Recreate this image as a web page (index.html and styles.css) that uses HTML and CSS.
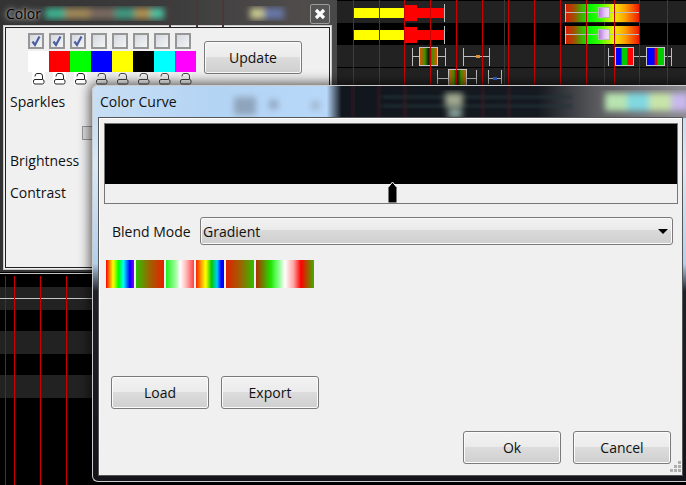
FILE: index.html
```html
<!DOCTYPE html>
<html lang="en">
<head>
<meta charset="utf-8">
<title>Color Curve</title>
<link rel="stylesheet" href="styles.css">
</head>
<body>
<main class="desktop">
  <svg class="timeline" width="686" height="485" viewBox="0 0 686 485">
    <defs>
      <linearGradient id="wide"><stop offset="0" stop-color="#e01800"/><stop offset=".12" stop-color="#a05000"/><stop offset=".3" stop-color="#00f000"/><stop offset=".45" stop-color="#30ff00"/><stop offset=".65" stop-color="#f0f000"/><stop offset=".8" stop-color="#ffa000"/><stop offset="1" stop-color="#f01000"/></linearGradient>
      <linearGradient id="pill"><stop offset="0" stop-color="#b070e0"/><stop offset=".6" stop-color="#e8c8f4"/><stop offset="1" stop-color="#f0e0f8"/></linearGradient>
      <linearGradient id="dk"><stop offset="0" stop-color="#e85000"/><stop offset=".3" stop-color="#409000"/><stop offset=".5" stop-color="#102000"/><stop offset=".7" stop-color="#409000"/><stop offset="1" stop-color="#e85000"/></linearGradient>
      <linearGradient id="rgb1"><stop offset="0" stop-color="#00f"/><stop offset=".3" stop-color="#00f"/><stop offset=".38" stop-color="#0c0"/><stop offset=".62" stop-color="#0c0"/><stop offset=".7" stop-color="#f00"/><stop offset="1" stop-color="#f00"/></linearGradient>
      <linearGradient id="rgb2"><stop offset="0" stop-color="#00f"/><stop offset=".42" stop-color="#00f"/><stop offset=".48" stop-color="#e00"/><stop offset=".58" stop-color="#e00"/><stop offset=".64" stop-color="#0c0"/><stop offset="1" stop-color="#0c0"/></linearGradient>
    </defs>
    <rect x="337" y="1" width="349" height="22" fill="#222"/>
    <rect x="337" y="45" width="349" height="22" fill="#222"/>
    <rect x="337" y="68" width="349" height="17" fill="#222"/>
    <rect x="0" y="287" width="100" height="23" fill="#222"/>
    <rect x="0" y="331" width="100" height="23" fill="#222"/>
    <rect x="0" y="375" width="100" height="23" fill="#222"/>
    <g fill="#383838">
      <rect x="504" y="0" width="1" height="85"/><rect x="604" y="0" width="1" height="85"/><rect x="5" y="276" width="1" height="209"/>
    </g>
    <g fill="#c4c4c4">
      <rect x="0" y="273" width="100" height="1"/><rect x="0" y="298" width="100" height="1"/>
    </g>
    <g fill="#ff0">
      <rect x="354" y="8" width="50" height="10"/><rect x="354" y="30" width="50" height="10"/>
    </g>
    <g fill="#f00">
      <rect x="404" y="5" width="13" height="16"/><rect x="417" y="8" width="27" height="10"/>
      <rect x="404" y="27" width="13" height="16"/><rect x="417" y="30" width="27" height="10"/>
    </g>
    <rect x="565" y="4" width="75" height="18" fill="url(#wide)"/>
    <rect x="565" y="26" width="75" height="18" fill="url(#wide)"/>
    <rect x="419.500" y="47.500" width="18" height="18" fill="url(#dk)" stroke="#c4c4c4"/>
    <rect x="448.500" y="69.500" width="18" height="18" fill="url(#dk)" stroke="#c4c4c4"/>
    <rect x="615.500" y="47.500" width="18" height="18" fill="url(#rgb1)" stroke="#c4c4c4"/>
    <rect x="646.500" y="47.500" width="18" height="18" fill="url(#rgb2)" stroke="#c4c4c4"/>
    <g fill="#bdbdbd">
      <rect x="444" y="4" width="1" height="18"/><rect x="444" y="26" width="1" height="18"/>
      <rect x="565" y="4" width="1" height="18"/><rect x="639" y="4" width="1" height="18"/><rect x="565" y="12" width="75" height="1"/>
      <rect x="565" y="26" width="1" height="18"/><rect x="639" y="26" width="1" height="18"/><rect x="565" y="34" width="75" height="1"/>
      <rect x="412" y="48" width="1" height="18"/><rect x="445" y="48" width="1" height="18"/><rect x="412" y="56" width="7" height="1"/><rect x="438" y="56" width="7" height="1"/>
      <rect x="463" y="48" width="1" height="18"/><rect x="489" y="48" width="1" height="18"/><rect x="463" y="56" width="26" height="1"/>
      <rect x="608" y="48" width="1" height="18"/><rect x="671" y="48" width="1" height="18"/><rect x="608" y="56" width="7" height="1"/><rect x="634" y="56" width="12" height="1"/><rect x="665" y="56" width="7" height="1"/>
      <rect x="437" y="70" width="1" height="14"/><rect x="476" y="70" width="1" height="14"/><rect x="437" y="78" width="11" height="1"/><rect x="467" y="78" width="10" height="1"/>
      <rect x="488" y="70" width="1" height="14"/><rect x="501" y="70" width="1" height="14"/><rect x="488" y="78" width="13" height="1"/>
    </g>
    <rect x="598.500" y="7.500" width="11" height="10" fill="url(#pill)" stroke="#b8b8b8"/>
    <rect x="598.500" y="29.500" width="11" height="10" fill="url(#pill)" stroke="#b8b8b8"/>
    <rect x="476" y="55" width="4" height="3" fill="#d89030"/>
    <rect x="493" y="77" width="4" height="3" fill="#3060d0"/>
    <g fill="#c80000">
      <rect x="353" y="0" width="1" height="85"/><rect x="379" y="0" width="1" height="85"/><rect x="404" y="0" width="1" height="85"/>
      <rect x="430" y="0" width="1" height="85"/><rect x="456" y="0" width="1" height="85"/><rect x="482" y="0" width="1" height="85"/>
      <rect x="508" y="0" width="1" height="85"/><rect x="534" y="0" width="1" height="85"/><rect x="560" y="0" width="1" height="85"/>
      <rect x="586" y="0" width="1" height="85"/><rect x="614" y="0" width="1" height="85"/><rect x="639" y="0" width="1" height="85"/>
      <rect x="667" y="0" width="1" height="85"/>
      <rect x="14" y="276" width="1" height="209"/><rect x="40" y="276" width="1" height="209"/><rect x="66" y="276" width="1" height="209"/>
    </g>
  </svg>

  <section class="window color-window">
    <header class="color-title">
      <svg class="glass" width="331" height="27" viewBox="0 0 331 27">
        <defs><filter id="soft"><feGaussianBlur stdDeviation="3"/></filter></defs>
        <g fill="#483838">
          <rect x="169" y="0" width="2" height="27"/><rect x="196" y="0" width="2" height="27"/><rect x="222" y="0" width="2" height="27"/>
        </g>
        <g filter="url(#soft)">
          <rect x="45" y="8" width="20" height="11" fill="#40b090"/>
          <rect x="65" y="8" width="25" height="11" fill="#a08858"/>
          <rect x="90" y="8" width="25" height="11" fill="#7a6a60"/>
          <rect x="115" y="8" width="20" height="11" fill="#409a80"/>
          <rect x="135" y="8" width="15" height="11" fill="#b09050"/>
          <rect x="150" y="8" width="14" height="11" fill="#50c0a0"/>
          <rect x="250" y="8" width="14" height="11" fill="#c8c890"/>
          <rect x="264" y="8" width="20" height="11" fill="#6878a8"/>
        </g>
      </svg>
      <h2 class="color-heading">Color</h2>
      <button class="close" type="button" aria-label="Close">
        <svg width="12" height="12" viewBox="0 0 12 12"><path d="M2 2 L10 10 M10 2 L2 10" stroke="#fff" stroke-width="3.200"/></svg>
      </button>
    </header>
    <div class="color-body">
      <div class="palette-row">
        <div class="palette">
          <span class="check on"><svg width="14" height="14" viewBox="0 0 14 14"><path d="M3.500 7.500 L6 11 L10.500 2.500" fill="none" stroke="#4a5f9f" stroke-width="2.200"/></svg></span>
          <span class="check on"><svg width="14" height="14" viewBox="0 0 14 14"><path d="M3.500 7.500 L6 11 L10.500 2.500" fill="none" stroke="#4a5f9f" stroke-width="2.200"/></svg></span>
          <span class="check on"><svg width="14" height="14" viewBox="0 0 14 14"><path d="M3.500 7.500 L6 11 L10.500 2.500" fill="none" stroke="#4a5f9f" stroke-width="2.200"/></svg></span>
          <span class="check"></span><span class="check"></span><span class="check"></span><span class="check"></span><span class="check"></span>
          <span class="sw white"></span><span class="sw red"></span><span class="sw green"></span><span class="sw blue"></span><span class="sw yellow"></span><span class="sw black"></span><span class="sw cyan"></span><span class="sw magenta"></span>
          <span class="lock open"><svg width="13" height="12" viewBox="0 0 13 12"><path d="M3 3.500 Q3 .500 5 .500 H8 Q10.500 .500 10.500 3 V6 M3 6.500 H10.500 Q12 6.500 12 8 V9.500 Q12 11 10.500 11 H3 Q1.500 11 1.500 9.500 V8 Q1.500 6.500 3 6.500 Z" fill="none" stroke="#222"/></svg></span>
          <span class="lock open"><svg width="13" height="12" viewBox="0 0 13 12"><path d="M3 3.500 Q3 .500 5 .500 H8 Q10.500 .500 10.500 3 V6 M3 6.500 H10.500 Q12 6.500 12 8 V9.500 Q12 11 10.500 11 H3 Q1.500 11 1.500 9.500 V8 Q1.500 6.500 3 6.500 Z" fill="none" stroke="#222"/></svg></span>
          <span class="lock open"><svg width="13" height="12" viewBox="0 0 13 12"><path d="M3 3.500 Q3 .500 5 .500 H8 Q10.500 .500 10.500 3 V6 M3 6.500 H10.500 Q12 6.500 12 8 V9.500 Q12 11 10.500 11 H3 Q1.500 11 1.500 9.500 V8 Q1.500 6.500 3 6.500 Z" fill="none" stroke="#222"/></svg></span>
          <span class="lock"><svg width="13" height="12" viewBox="0 0 13 12"><path d="M3 3.500 Q3 .500 5 .500 H8 Q10.500 .500 10.500 3 V6 M3 6.500 H10.500 Q12 6.500 12 8 V9.500 Q12 11 10.500 11 H3 Q1.500 11 1.500 9.500 V8 Q1.500 6.500 3 6.500 Z" fill="none" stroke="#444"/></svg></span>
          <span class="lock"><svg width="13" height="12" viewBox="0 0 13 12"><path d="M3 3.500 Q3 .500 5 .500 H8 Q10.500 .500 10.500 3 V6 M3 6.500 H10.500 Q12 6.500 12 8 V9.500 Q12 11 10.500 11 H3 Q1.500 11 1.500 9.500 V8 Q1.500 6.500 3 6.500 Z" fill="none" stroke="#444"/></svg></span>
          <span class="lock"><svg width="13" height="12" viewBox="0 0 13 12"><path d="M3 3.500 Q3 .500 5 .500 H8 Q10.500 .500 10.500 3 V6 M3 6.500 H10.500 Q12 6.500 12 8 V9.500 Q12 11 10.500 11 H3 Q1.500 11 1.500 9.500 V8 Q1.500 6.500 3 6.500 Z" fill="none" stroke="#444"/></svg></span>
          <span class="lock"><svg width="13" height="12" viewBox="0 0 13 12"><path d="M3 3.500 Q3 .500 5 .500 H8 Q10.500 .500 10.500 3 V6 M3 6.500 H10.500 Q12 6.500 12 8 V9.500 Q12 11 10.500 11 H3 Q1.500 11 1.500 9.500 V8 Q1.500 6.500 3 6.500 Z" fill="none" stroke="#444"/></svg></span>
          <span class="lock"><svg width="13" height="12" viewBox="0 0 13 12"><path d="M3 3.500 Q3 .500 5 .500 H8 Q10.500 .500 10.500 3 V6 M3 6.500 H10.500 Q12 6.500 12 8 V9.500 Q12 11 10.500 11 H3 Q1.500 11 1.500 9.500 V8 Q1.500 6.500 3 6.500 Z" fill="none" stroke="#444"/></svg></span>
        </div>
        <button class="btn update" type="button">Update</button>
      </div>
      <div class="field sparkles">Sparkles</div>
      <div class="mini-row"><span class="mini"></span></div>
      <div class="field brightness">Brightness</div>
      <div class="field contrast">Contrast</div>
    </div>
  </section>

  <section class="window dialog">
    <header class="dialog-title">
      <svg class="glass" width="594" height="33" viewBox="0 0 594 33">
        <defs>
          <filter id="softer"><feGaussianBlur stdDeviation="3"/></filter>
          <filter id="softest"><feGaussianBlur stdDeviation="1.500"/></filter>
          <linearGradient id="glassbg">
            <stop offset="0" stop-color="#c8dff4"/><stop offset=".2" stop-color="#b4d4f4"/><stop offset=".395" stop-color="#b8d8fa"/><stop offset=".42" stop-color="#12171e"/><stop offset=".75" stop-color="#151a20"/><stop offset=".85" stop-color="#5a5a5e"/><stop offset="1" stop-color="#8a8a90"/>
          </linearGradient>
        </defs>
        <rect width="594" height="33" fill="url(#glassbg)"/>
        <g filter="url(#softest)">
          <g fill="#243038">
            <rect x="290" y="11" width="190" height="2"/><rect x="290" y="20" width="190" height="2"/>
          </g>
          <g fill="#3a1c24">
            <rect x="260" y="0" width="2" height="33"/><rect x="286" y="0" width="2" height="33"/><rect x="312" y="0" width="2" height="33"/>
            <rect x="390" y="0" width="2" height="33"/><rect x="416" y="0" width="2" height="33"/>
          </g>
        </g>
        <g filter="url(#softer)">
          <rect x="142" y="12" width="22" height="18" fill="#8ea4bc"/>
          <rect x="177" y="15" width="9" height="9" fill="#90a6be"/>
          <rect x="219" y="16" width="9" height="9" fill="#a0b8d0"/>
          <rect x="353" y="8" width="18" height="14" fill="#a0a890"/>
          <rect x="356" y="24" width="14" height="9" fill="#90a8a0"/>
          <rect x="513" y="8" width="22" height="18" fill="#b8e4b0"/>
          <rect x="535" y="8" width="22" height="18" fill="#80d8e0"/>
          <rect x="557" y="8" width="22" height="18" fill="#c8e4a8"/>
          <rect x="579" y="8" width="18" height="18" fill="#c8b8ec"/>
        </g>
      </svg>
      <h2 class="dialog-heading">Color Curve</h2>
    </header>
    <div class="dialog-body">
      <div class="curve">
        <div class="curve-black"></div>
        <svg class="handle" width="11" height="22" viewBox="0 0 11 22"><path d="M1.500 21.500 V6 L5.500 1 L9.500 6 V21.500 Z" fill="#000"/><path d="M1.500 6 L5.500 1 L9.500 6" fill="none" stroke="#fff"/></svg>
      </div>
      <div class="blend-row">
        <span class="blend-label">Blend Mode</span>
        <div class="combo"><span>Gradient</span><i class="arrow"></i></div>
      </div>
      <div class="gradients">
        <span class="grad g1"></span><span class="grad g2"></span><span class="grad g3"></span><span class="grad g4"></span><span class="grad g5"></span><span class="grad g6"></span><span class="grad g7"></span>
      </div>
      <div class="file-row">
        <button class="btn" type="button">Load</button>
        <button class="btn" type="button">Export</button>
      </div>
      <div class="action-row">
        <button class="btn" type="button">Ok</button>
        <button class="btn" type="button">Cancel</button>
      </div>
      <svg class="grip" width="14" height="14" viewBox="0 0 14 14" fill="#b0b0b0">
        <rect x="10" y="1" width="3" height="3"/><rect x="6" y="5" width="3" height="3"/><rect x="10" y="5" width="3" height="3"/><rect x="2" y="9" width="3" height="3"/><rect x="6" y="9" width="3" height="3"/><rect x="10" y="9" width="3" height="3"/>
      </svg>
    </div>
  </section>
</main>
</body>
</html>
```
FILE: styles.css
```css
* { box-sizing: border-box; }
html, body { margin: 0; padding: 0; background: #000; }
body { font-family: "Open Sans", "Noto Sans", sans-serif; font-size: 14px; color: #111; }
.desktop { position: relative; width: 686px; height: 485px; overflow: hidden; background: #000; }
.timeline { position: absolute; left: 0; top: 0; display: block; }
.window { position: absolute; }

/* Color window */
.color-window { left: 0; top: 0; width: 337px; height: 272px; display: flex; flex-direction: column; padding: 0 6px 3px 3px;
  background: linear-gradient(90deg, #333, #3c3c3c 50%, #504c4c 90%, #484848); }
.color-title { position: relative; height: 26px; flex: none; display: flex; align-items: center; justify-content: space-between; padding: 0 1px 0 3px; }
.glass { position: absolute; left: 0; top: 0; display: block; }
.color-title .glass { left: -3px; }
.color-heading { position: relative; margin: 0; font-size: 14px; font-weight: 400; color: #000; text-shadow: 0 0 3px rgba(255,255,255,.6), 0 0 6px rgba(255,255,255,.6), 0 0 10px rgba(255,255,255,.4); }
.close { position: relative; width: 20px; height: 20px; padding: 0; margin-top: 2px; display: flex; align-items: center; justify-content: center; background: #555; border: 1px solid #9a9a9a; border-radius: 2px; }
.color-body { flex: 1; background: #f0f0f0; border: 2px solid #f0f0f0; outline: 1px solid #202020; outline-offset: -2px; box-shadow: 0 0 0 1px #c8c8c8; padding: 5px 0 0 22px; margin-left: 1px; display: flex; flex-direction: column; }
.palette-row { display: flex; align-items: flex-start; gap: 8px; }
.palette { display: grid; grid-template-columns: repeat(8, 21px); grid-template-rows: 18px 21px 13px; }
.check { width: 16px; height: 16px; border: 2px solid #969696; background: linear-gradient(135deg, #d4d8e0, #f4f4f4); display: block; position: relative; }
.check svg { position: absolute; left: -1px; top: -1px; display: block; }
.sw { display: block; }
.white { background: #fff; } .red { background: #f00; } .green { background: #0f0; } .blue { background: #00f; }
.yellow { background: #ff0; } .black { background: #000; } .cyan { background: #0ff; } .magenta { background: #f0f; }
.lock { width: 13px; height: 13px; margin-left: 4px; display: flex; align-items: center; justify-content: center; background: #f4f4f4; }
.lock.open { background: #fff; }
.lock svg { display: block; }
.btn { width: 98px; height: 33px; padding: 0; font: inherit; color: #111; border: 1px solid #7a7a7a; border-radius: 3px; box-shadow: inset 0 0 0 1px #fbfbfb;
  background: linear-gradient(180deg, #f2f2f2 0, #ebebeb 50%, #dcdcdc 50%, #cfcfcf 100%); }
.update { margin-top: 8px; }
.field { margin-left: -18px; line-height: 20px; }
.sparkles { margin-top: 7px; }
.mini-row { height: 14px; margin-top: 14px; padding-left: 54px; }
.mini { display: block; width: 14px; height: 14px; background: #ddd; border: 1px solid #999; }
.brightness { margin-top: 11px; }
.contrast { margin-top: 12px; }

/* Dialog */
.dialog { left: 92px; top: 85px; width: 594px; height: 397px; display: flex; flex-direction: column; border-radius: 6px 0 0 6px; padding: 0 4px 7px 7px; overflow: visible;
  border: 0; box-shadow: 0 0 12px 2px rgba(0,0,0,.65);
  background: linear-gradient(180deg, #b8d6f4 0, #d8e8f6 20%, #b0d0f0 45%, #1e2028 52%, #14141a 100%); }
.dialog::before { content: ""; position: absolute; left: 0; top: 0; right: 0; bottom: 0; border: 1px solid #ccc; border-right: 0; border-radius: 6px 0 0 6px; pointer-events: none; z-index: 3; }
.dialog-title { position: relative; height: 33px; flex: none; margin: 0 -4px 0 -7px; display: flex; align-items: center; padding-left: 8px; border-radius: 6px 0 0 0; overflow: hidden; }
.dialog-heading { position: relative; margin: 0; font-size: 14px; font-weight: 400; color: #111; }
.dialog-body { position: relative; flex: 1; background: #f0f0f0; border-top: 1px solid #fff; border-left: 1px solid #fff; outline: 1px solid #555; display: flex; flex-direction: column; padding: 4px 8px 10px 4px; }
.curve { position: relative; width: 574px; height: 81px; flex: none; border: 1px solid #777; background: #f0f0f0; }
.curve-black { height: 60px; background: #000; }
.handle { position: absolute; left: 282px; top: 57px; display: block; }
.blend-row { margin-top: 13px; display: flex; align-items: center; height: 28px; padding-left: 8px; }
.blend-label { width: 88px; flex: none; }
.combo { width: 473px; height: 28px; display: flex; align-items: center; justify-content: space-between; padding: 0 4px 0 2px; border: 1px solid #7a7a7a; border-radius: 3px; box-shadow: inset 0 0 0 1px #fafafa;
  background: linear-gradient(180deg, #f2f2f2 0, #ebebeb 45%, #dadada 45%, #cfcfcf 100%); }
.arrow { width: 0; height: 0; border-style: solid; border-width: 5px 5px 0; border-color: #000 transparent transparent; }
.gradients { margin-top: 15px; padding-left: 2px; display: flex; gap: 2px; height: 28px; }
.grad { width: 28px; display: block; }
.g1 { background: linear-gradient(90deg, #f00, #ff0 25%, #0f0 45%, #0ff 62%, #00f 85%, #80f); }
.g2 { background: linear-gradient(90deg, #30c000, #a06000 50%, #e82000); }
.g3 { background: linear-gradient(90deg, #20f020, #a0ffa0 35%, #fff 50%, #ffc0c0 70%, #ff4040); }
.g4 { background: linear-gradient(90deg, #f20, #fc0 25%, #ff0 35%, #0c0 55%, #0cf 75%, #00f 90%); }
.g5 { background: linear-gradient(90deg, #e02000, #a06000 50%, #30c000); }
.g6 { width: 29px; background: linear-gradient(90deg, #b03000, #20e000 50%, #60ff60 70%, #fff); margin-right: -2px; }
.g7 { width: 29px; background: linear-gradient(90deg, #fff, #ffa0a0 30%, #f00 55%, #40b000); }
.file-row { margin-top: 88px; padding-left: 7px; display: flex; gap: 12px; }
.action-row { margin-top: 22px; display: flex; gap: 12px; justify-content: flex-end; padding-right: 3px; }
.grip { position: absolute; right: 0; bottom: 1px; display: block; }
```
